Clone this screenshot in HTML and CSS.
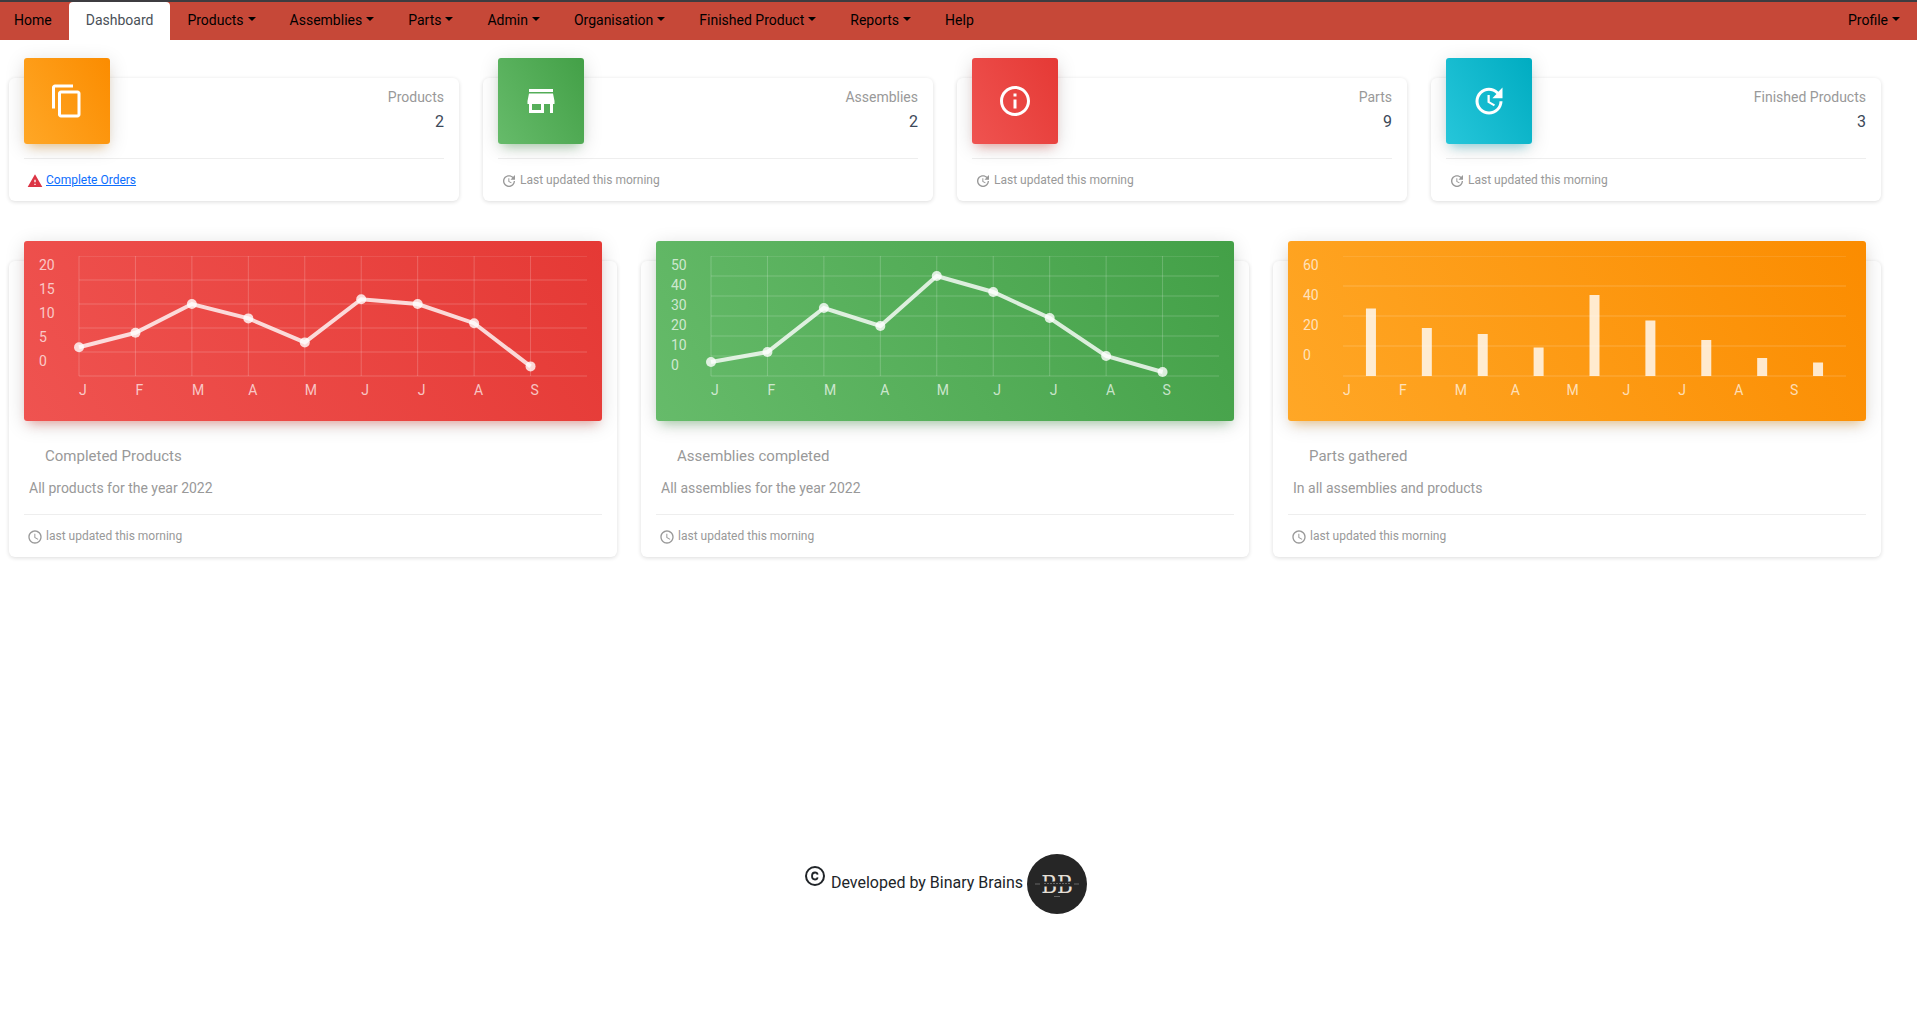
FILE: index.html
```html
<!DOCTYPE html>
<html lang="en">
<head>
<meta charset="utf-8">
<meta name="viewport" content="width=device-width, initial-scale=1">
<title>Dashboard</title>
<link rel="stylesheet" href="styles.css">
</head>
<body>
<svg class="sprite" aria-hidden="true">
  <symbol id="copy" viewBox="0 0 24 24"><path d="M16 1H4c-1.100 0-2 .9-2 2v14h2V3h12V1zm3 4H8c-1.100 0-2 .9-2 2v14c0 1.100.9 2 2 2h11c1.100 0 2-.9 2-2V7c0-1.100-.9-2-2-2zm0 16H8V7h11v14z"/></symbol>
  <symbol id="store" viewBox="0 0 24 24"><path d="M20 4H4v2h16V4zm1 10v-2l-1-5H4l-1 5v2h1v6h10v-6h4v6h2v-6h1zm-9 4H6v-4h6v4z"/></symbol>
  <symbol id="info" viewBox="0 0 24 24"><path d="M11 17h2v-6h-2v6zm1-15C6.480 2 2 6.480 2 12s4.480 10 10 10 10-4.480 10-10S17.520 2 12 2zm0 18c-4.410 0-8-3.590-8-8s3.590-8 8-8 8 3.590 8 8-3.590 8-8 8zM11 9h2V7h-2v2z"/></symbol>
  <symbol id="update" viewBox="0 0 24 24"><path d="M21 10.120h-6.780l2.740-2.820c-2.730-2.700-7.150-2.800-9.880-.1-2.730 2.710-2.730 7.080 0 9.790s7.150 2.710 9.880 0C18.320 15.650 19 14.080 19 12.100h2c0 1.980-.88 4.550-2.640 6.290-3.510 3.480-9.210 3.480-12.720 0-3.500-3.470-3.530-9.110-.02-12.580s9.140-3.470 12.650 0L21 3v7.120zM12.500 8v4.250l3.500 2.080-.72 1.210L11 13V8h1.500z"/></symbol>
  <symbol id="clock" viewBox="0 0 24 24"><path d="M11.990 2C6.470 2 2 6.480 2 12s4.470 10 9.990 10C17.520 22 22 17.520 22 12S17.520 2 11.990 2zM12 20c-4.420 0-8-3.580-8-8s3.580-8 8-8 8 3.580 8 8-3.580 8-8 8zm.5-13H11v6l5.250 3.150.75-1.230-4.500-2.670z"/></symbol>
  <symbol id="warning" viewBox="0 0 24 24"><path d="M1 21h22L12 2 1 21zm12-3h-2v-2h2v2zm0-4h-2v-4h2v4z"/></symbol>
  <symbol id="copyright" viewBox="0 0 24 24"><circle cx="12" cy="12" r="9" fill="none" stroke="currentColor" stroke-width="2"/><path d="M14.600 10.600C14.400 9.300 13.400 8.500 12 8.500c-1.900 0-3 1.400-3 3.500s1.100 3.500 3 3.500c1.400 0 2.400-.8 2.600-2.100" fill="none" stroke="currentColor" stroke-width="1.800"/></symbol>
</svg>

<nav class="navbar">
  <a class="nav-link" href="#">Home</a>
  <a class="nav-link active" href="#" aria-current="page">Dashboard</a>
  <a class="nav-link menu" href="#">Products</a>
  <a class="nav-link menu" href="#">Assemblies</a>
  <a class="nav-link menu" href="#">Parts</a>
  <a class="nav-link menu" href="#">Admin</a>
  <a class="nav-link menu" href="#">Organisation</a>
  <a class="nav-link menu" href="#">Finished Product</a>
  <a class="nav-link menu" href="#">Reports</a>
  <a class="nav-link" href="#">Help</a>
  <a class="nav-link menu profile" href="#">Profile</a>
</nav>

<main class="page">
  <section class="stats">
    <article class="card">
      <div class="stat">
        <div class="tile orange"><svg class="icon-lg"><use href="#copy"/></svg></div>
        <div class="stat-text"><p class="stat-label">Products</p><h3 class="stat-value">2</h3></div>
      </div>
      <div class="card-footer"><svg class="icon-sm danger"><use href="#warning"/></svg><a class="link" href="#">Complete Orders</a></div>
    </article>
    <article class="card">
      <div class="stat">
        <div class="tile green"><svg class="icon-lg"><use href="#store"/></svg></div>
        <div class="stat-text"><p class="stat-label">Assemblies</p><h3 class="stat-value">2</h3></div>
      </div>
      <div class="card-footer"><svg class="icon-sm"><use href="#update"/></svg><span>Last updated this morning</span></div>
    </article>
    <article class="card">
      <div class="stat">
        <div class="tile red"><svg class="icon-lg"><use href="#info"/></svg></div>
        <div class="stat-text"><p class="stat-label">Parts</p><h3 class="stat-value">9</h3></div>
      </div>
      <div class="card-footer"><svg class="icon-sm"><use href="#update"/></svg><span>Last updated this morning</span></div>
    </article>
    <article class="card">
      <div class="stat">
        <div class="tile cyan"><svg class="icon-lg"><use href="#update"/></svg></div>
        <div class="stat-text"><p class="stat-label">Finished Products</p><h3 class="stat-value">3</h3></div>
      </div>
      <div class="card-footer"><svg class="icon-sm"><use href="#update"/></svg><span>Last updated this morning</span></div>
    </article>
  </section>

  <section class="charts">
    <article class="card">
      <div class="chart red" id="completed-products"></div>
      <div class="chart-text"><h4 class="chart-title">Completed Products</h4><p class="chart-note">All products for the year 2022</p></div>
      <div class="card-footer"><svg class="icon-sm"><use href="#clock"/></svg><span>last updated this morning</span></div>
    </article>
    <article class="card">
      <div class="chart green" id="assemblies-completed"></div>
      <div class="chart-text"><h4 class="chart-title">Assemblies completed</h4><p class="chart-note">All assemblies for the year 2022</p></div>
      <div class="card-footer"><svg class="icon-sm"><use href="#clock"/></svg><span>last updated this morning</span></div>
    </article>
    <article class="card">
      <div class="chart orange bars" id="parts-gathered"></div>
      <div class="chart-text"><h4 class="chart-title">Parts gathered</h4><p class="chart-note">In all assemblies and products</p></div>
      <div class="card-footer"><svg class="icon-sm"><use href="#clock"/></svg><span>last updated this morning</span></div>
    </article>
  </section>

  <footer class="credits">
    <svg class="icon-md"><use href="#copyright"/></svg>
    <span class="credits-text">Developed by Binary Brains</span>
    <svg class="logo" viewBox="0 0 60 60" role="img" aria-label="Binary Brains">
      <circle cx="30" cy="30" r="30" fill="#262626"/>
      <text class="logo-text" x="30" y="39" text-anchor="middle">BB</text>
      <path d="M14 30h32" stroke="#262626" stroke-width="5"/>
      <path d="M17 29.500h27" stroke="#666" stroke-dasharray="2 1"/>
      <path d="M8 30h5M47 30h5M27 42.500h6" stroke="#666"/>
    </svg>
  </footer>
</main>
<script src="charts.js"></script>
</body>
</html>
```
FILE: styles.css
```css
* { box-sizing: border-box; }
body {
  margin: 0;
  background: #fff;
  color: #212529;
  font-family: Roboto, sans-serif;
  font-size: 14px;
}
h3, h4, p { margin: 0; font-weight: 400; }
svg { display: block; fill: currentColor; }
.sprite { display: none; }

.navbar {
  display: flex;
  height: 40px;
  padding-right: 1px;
  background: #c64838;
  border-top: 2px solid #3d3c40;
}
.nav-link {
  display: flex;
  align-items: center;
  padding: 0 17px 2px;
  color: #000;
  line-height: 20px;
  text-decoration: none;
}
.nav-link:first-child { padding-left: 14px; }
.nav-link.active {
  background: #fff;
  border-radius: 4px 4px 0 0;
  color: #495057;
}
.menu::after {
  content: "";
  margin: 0 0 2px 4px;
  border: 4px solid transparent;
  border-top-color: currentColor;
  border-bottom: 0;
}
.profile { margin-left: auto; padding-right: 16px; }

.page { padding: 38px 36px 0 9px; }
.stats, .charts { display: grid; gap: 24px; }
.stats { grid-template-columns: repeat(4, minmax(0, 1fr)); }
.charts { grid-template-columns: repeat(3, minmax(0, 1fr)); margin-top: 60px; }

.card {
  padding: 0 15px;
  border-radius: 6px;
  background: #fff;
  box-shadow: 0 1px 4px rgba(0, 0, 0, .14);
}
.orange { --tint: 255, 152, 0; background: linear-gradient(60deg, #ffa726, #fb8c00); }
.green { --tint: 76, 175, 80; background: linear-gradient(60deg, #66bb6a, #43a047); }
.red { --tint: 244, 67, 54; background: linear-gradient(60deg, #ef5350, #e53935); }
.cyan { --tint: 0, 188, 212; background: linear-gradient(60deg, #26c6da, #00acc1); }
.tile, .chart {
  border-radius: 3px;
  color: #fff;
  box-shadow: 0 4px 20px rgba(0, 0, 0, .14), 0 7px 10px -5px rgba(var(--tint), .4);
}

.stat { display: flex; justify-content: space-between; height: 80px; }
.tile {
  display: grid;
  place-items: center;
  width: 86px;
  height: 86px;
  margin-top: -20px;
}
.icon-lg { width: 36px; height: 36px; }
.icon-md { width: 24px; height: 24px; margin-top: 10px; }
.icon-sm { width: 16px; height: 16px; margin-top: 2px; }
.stat-text { padding-top: 8px; text-align: right; }
.stat-label { color: #999; line-height: 22px; }
.stat-value { color: #3c4858; font-size: 16px; line-height: 28px; }

.card-footer {
  display: flex;
  align-items: center;
  gap: 3px;
  height: 43px;
  padding-left: 3px;
  border-top: 1px solid #eee;
  color: #999;
  font-size: 12px;
}
.danger { color: #dc3545; }
.link { color: #0d6efd; }

.chart {
  display: grid;
  grid-template-columns: 40px minmax(0, 1fr);
  grid-template-rows: 120px 30px;
  height: 180px;
  margin-top: -20px;
  padding: 15px;
  line-height: 18px;
}
.chart.bars { padding-right: 20px; }
.y-labels { display: flex; flex-direction: column; }
.y-labels span { flex: 1 1 0; }
.y-labels, .x-labels { color: rgba(255, 255, 255, .7); }
.x-labels {
  display: grid;
  grid-template-columns: repeat(9, minmax(0, 1fr));
  grid-column: 2;
  padding-top: 5px;
}
.plot { width: 100%; height: 120px; overflow: visible; clip-path: inset(0 -8px -8px -8px); }
.plot svg { overflow: visible; }
.grid-line { stroke: rgba(255, 255, 255, .2); }
.series {
  fill: none;
  stroke: rgba(255, 255, 255, .8);
  stroke-width: 4px;
  vector-effect: non-scaling-stroke;
}
.point { fill: rgba(255, 255, 255, .8); }
.bar { stroke: rgba(255, 255, 255, .8); stroke-width: 10px; }

.chart-text { padding: 23px 5px 16px; color: #999; }
.chart-title { padding-left: 16px; font-size: 15px; line-height: 24px; }
.chart-note { margin-top: 10px; line-height: 20px; }

.credits {
  display: flex;
  justify-content: center;
  margin-top: 297px;
  padding-bottom: 32px;
  font-size: 16px;
}
.credits-text { padding: 0 4px; line-height: 58px; }
.logo { width: 60px; height: 60px; }
.logo-text { fill: #e4dfd6; font: 24px "DejaVu Serif Condensed", "Liberation Serif", serif; }
```
FILE: charts.js
```javascript
const months = ["J", "F", "M", "A", "M", "J", "J", "A", "S"];
const plotHeight = 120;

function drawChart(id, kind, max, step, values) {
  const y = value => plotHeight - value * plotHeight / max;
  const x = index => index * 100 / months.length;
  let marks = "";
  for (let v = 0; v <= max; v += step) {
    marks += `<line class="grid-line" x1="0" x2="100%" y1="${y(v)}" y2="${y(v)}"/>`;
  }
  if (kind === "line") {
    months.forEach((m, i) => {
      marks += `<line class="grid-line" x1="${x(i)}%" x2="${x(i)}%" y1="0" y2="${plotHeight}"/>`;
    });
    const points = values.map((v, i) => `${i},${y(v)}`).join(" ");
    marks += `<svg width="100%" height="${plotHeight}" viewBox="0 0 ${months.length} ${plotHeight}" preserveAspectRatio="none"><polyline class="series" points="${points}"/></svg>`;
    values.forEach((v, i) => {
      marks += `<circle class="point" cx="${x(i)}%" cy="${y(v)}" r="5"/>`;
    });
  } else {
    values.forEach((v, i) => {
      marks += `<line class="bar" x1="${x(i + 0.5)}%" x2="${x(i + 0.5)}%" y1="${plotHeight}" y2="${y(v)}"/>`;
    });
  }
  // The top grid line has no label, so there is one label row per grid interval.
  let labels = "";
  for (let v = max - step; v >= 0; v -= step) labels += `<span>${v}</span>`;
  document.getElementById(id).innerHTML =
    `<div class="y-labels">${labels}</div><svg class="plot">${marks}</svg>` +
    `<div class="x-labels">${months.map(m => `<span>${m}</span>`).join("")}</div>`;
}

drawChart("completed-products", "line", 25, 5, [6, 9, 15, 12, 7, 16, 15, 11, 2]);
drawChart("assemblies-completed", "line", 60, 10, [7, 12, 34, 25, 50, 42, 29, 10, 2]);
drawChart("parts-gathered", "bar", 80, 20, [45, 32, 28, 19, 54, 37, 24, 12, 9]);
```
